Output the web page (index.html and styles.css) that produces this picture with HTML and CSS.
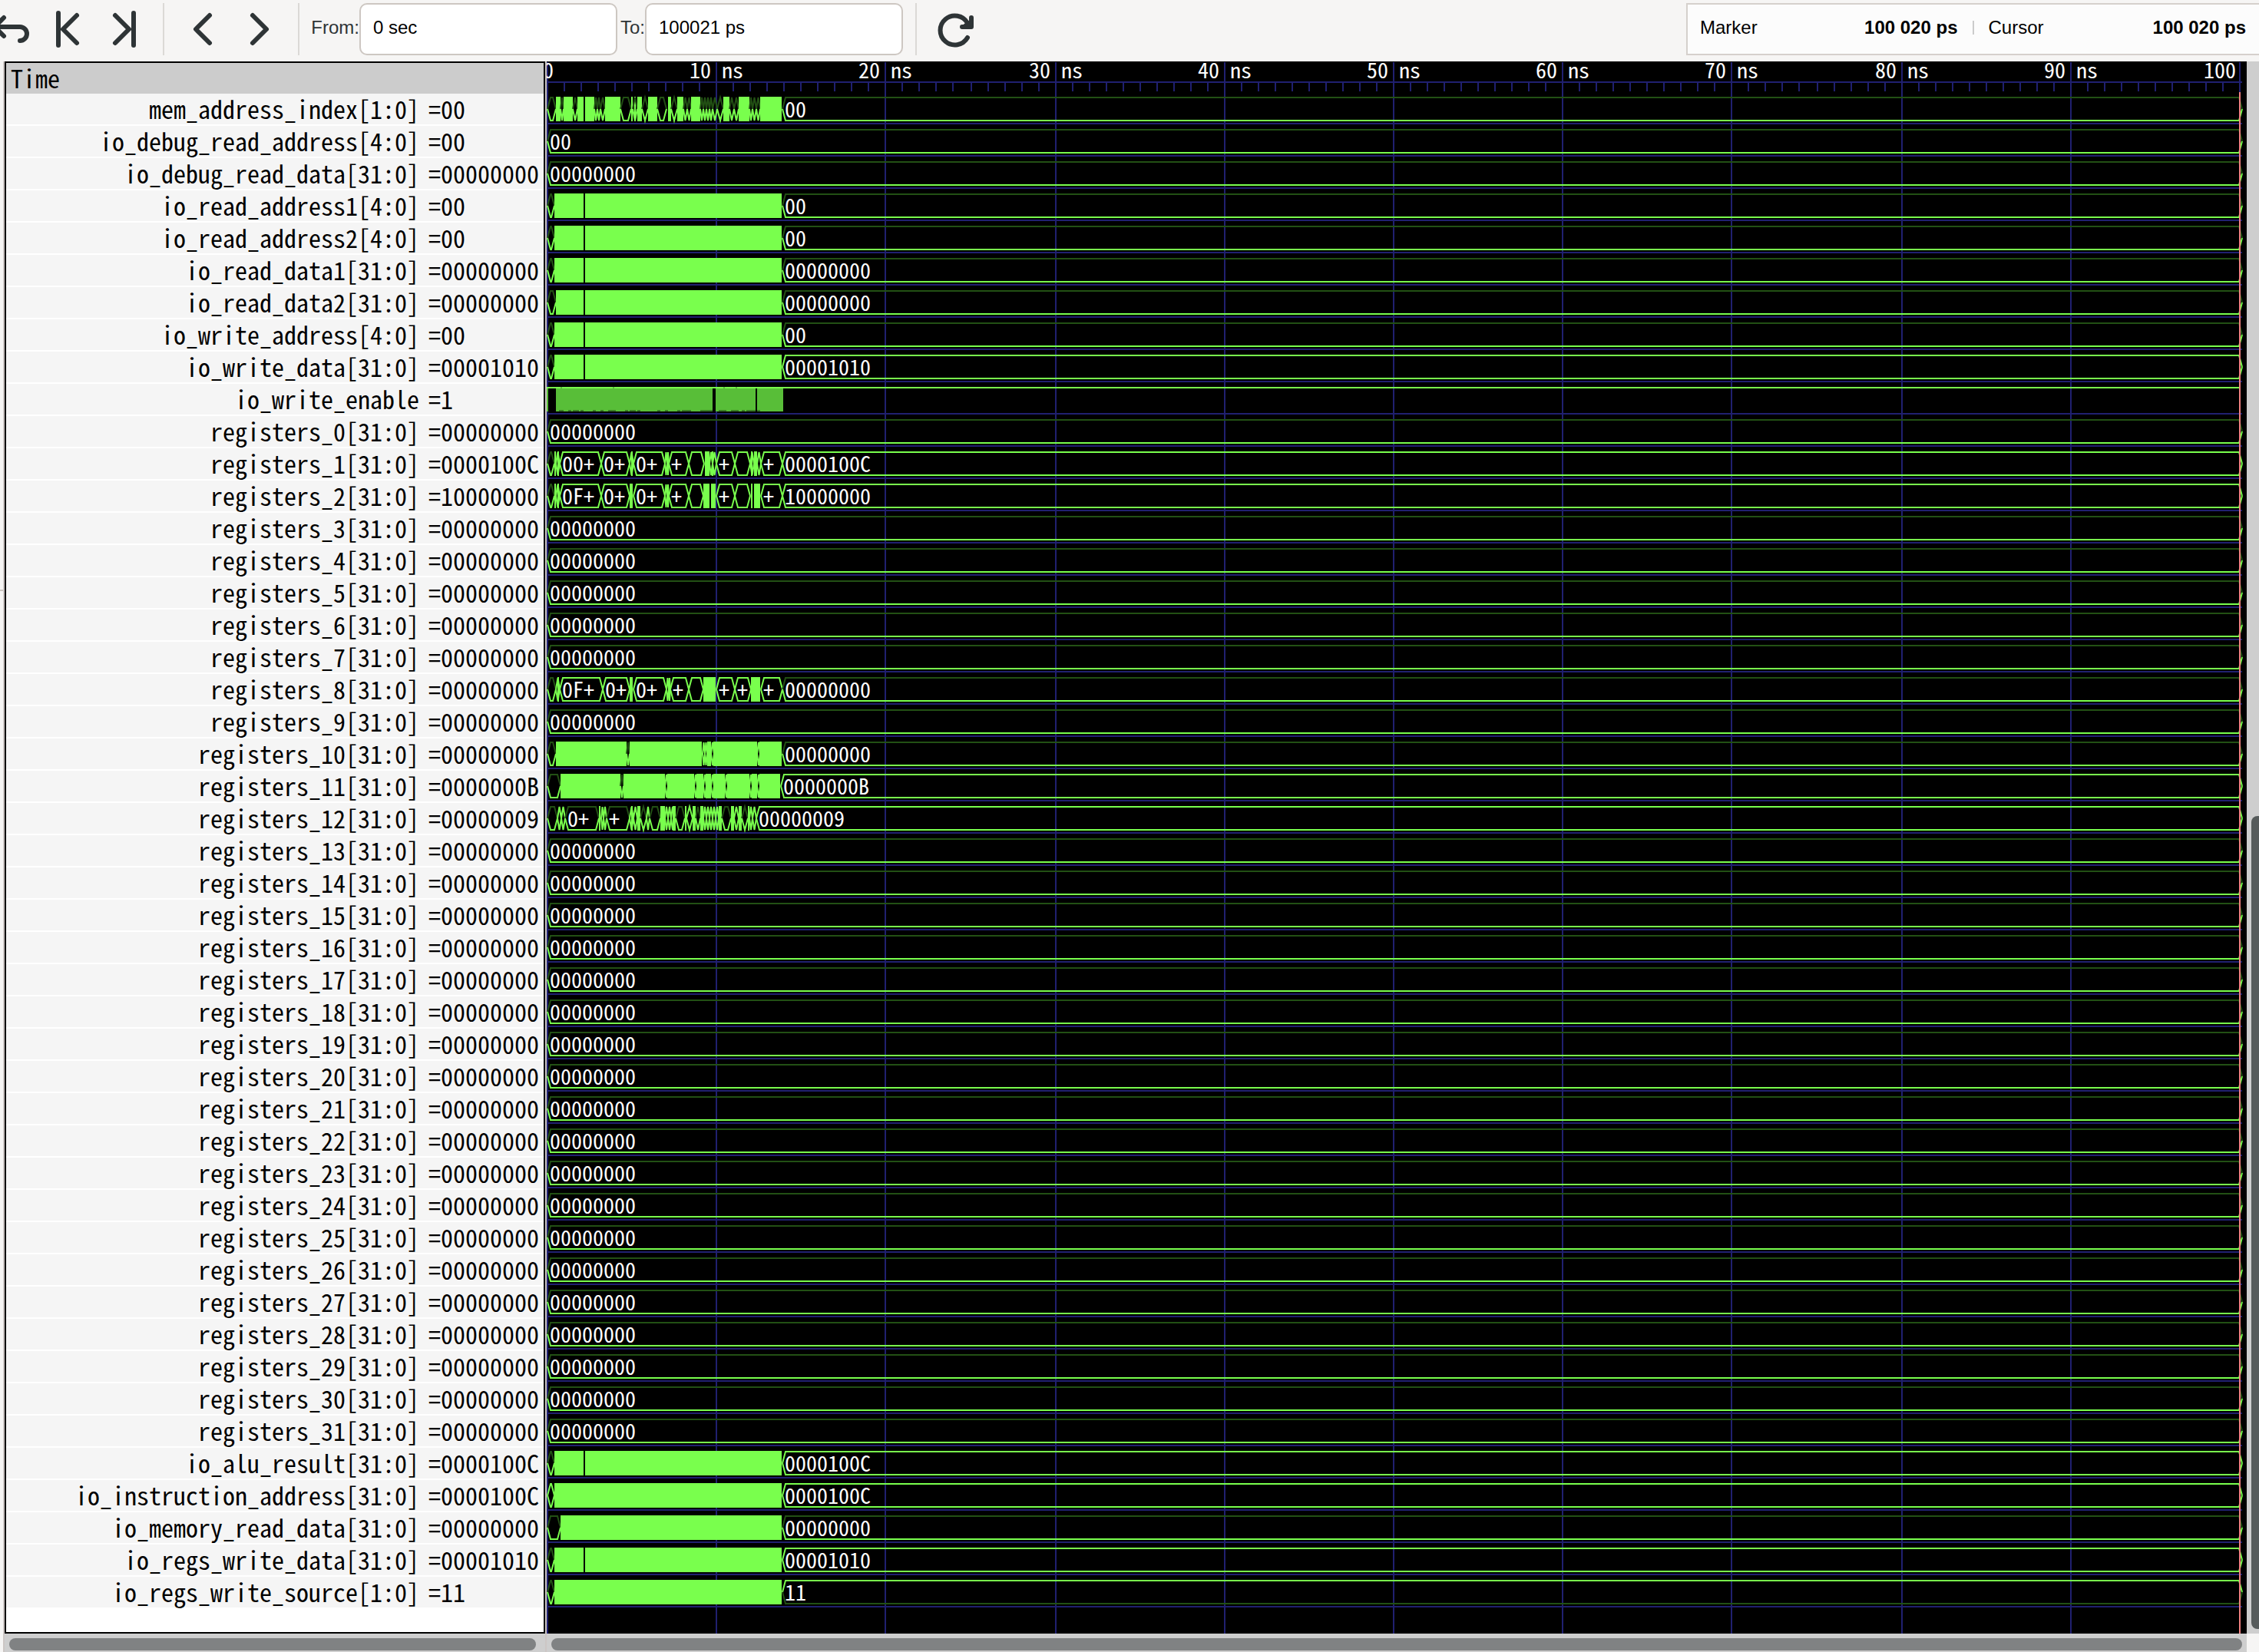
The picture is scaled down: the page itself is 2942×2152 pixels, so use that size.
FILE: index.html
```
<!DOCTYPE html>
<html lang="en">
<head>
<meta charset="utf-8">
<title>Waveform viewer</title>
<link rel="stylesheet" href="styles.css">
</head>
<body>
<header class="toolbar">
  <button class="tool" type="button" aria-label="Undo zoom"><svg viewBox="0 0 74 76"><path d="M28 23L16 35L28 47M17 35H49A9 9 0 0 1 49 53"/></svg></button>
  <button class="tool" type="button" aria-label="Zoom to start"><svg viewBox="0 0 74 76"><path d="M25 17V59M49 20L31 38L49 56"/></svg></button>
  <button class="tool" type="button" aria-label="Zoom to end"><svg viewBox="0 0 74 76"><path d="M49 17V59M25 20L43 38L25 56"/></svg></button>
  <span class="divider"></span>
  <button class="tool" type="button" aria-label="Find previous edge"><svg viewBox="0 0 74 76"><path d="M46 20L28 38L46 56"/></svg></button>
  <button class="tool" type="button" aria-label="Find next edge"><svg viewBox="0 0 74 76"><path d="M28 20L46 38L28 56"/></svg></button>
  <span class="divider"></span>
  <label class="from" for="from">From:</label>
  <input class="range" id="from" type="text" value="0 sec">
  <label class="to" for="to">To:</label>
  <input class="range" id="to" type="text" value="100021 ps">
  <span class="divider"></span>
  <button class="tool" type="button" aria-label="Reload"><svg viewBox="0 0 74 76"><path d="M53 49A19 19 0 1 1 53 30L56 34M58 23V35H46"/><path class="solid" d="M49 32L58 26V35Z"/></svg></button>
  <dl class="times">
    <div class="time"><dt>Marker</dt><dd>100 020 ps</dd></div>
    <span class="times-split"></span>
    <div class="time"><dt>Cursor</dt><dd>100 020 ps</dd></div>
  </dl>
</header>
<main class="viewer">
  <div class="gutter"><span class="grip"></span></div>
  <section class="names">
    <div class="names-pane">
      <table class="signals">
        <colgroup><col class="col-name"><col></colgroup>
        <thead><tr><th colspan="2">Time</th></tr></thead>
        <tbody id="signals"></tbody>
      </table>
    </div>
    <div class="hscroll"><span class="hthumb"></span></div>
  </section>
  <section class="waves">
    <svg class="canvas" id="canvas" role="img" aria-label="Signal waveforms"></svg>
    <div class="hscroll"><span class="hthumb"></span></div>
  </section>
  <div class="side">
    <div class="vscroll"><span class="vthumb"></span></div>
  </div>
</main>
<script src="waves.js"></script>
</body>
</html>
```
FILE: styles.css
```
* { box-sizing: border-box; }

body {
  display: flex;
  flex-direction: column;
  height: 100vh;
  margin: 0;
  overflow: hidden;
  background: #f6f5f4;
  color: #000;
  font-family: "Liberation Sans", Arial, sans-serif;
  font-size: 24px;
}

/* Toolbar */
.toolbar {
  display: flex;
  flex: none;
  height: 80px;
  margin-left: -23px;
  padding: 4px 0 8px;
  color: #2e3436;
}
.tool {
  flex: none;
  width: 74px;
  height: 76px;
  margin: -4px 0 0;
  padding: 0;
  border: 0;
  background: none;
}
.tool svg {
  display: block;
  width: 74px;
  height: 76px;
  fill: none;
  stroke: #2e3436;
  stroke-width: 6;
  stroke-linecap: round;
  stroke-linejoin: round;
}
.tool .solid { fill: #2e3436; stroke-width: 2; }
.divider {
  flex: none;
  width: 2px;
  margin: 0 13px;
  background: #dbd9d6;
}
.toolbar label {
  flex: none;
  line-height: 64px;
  text-align: right;
}
.from { width: 65px; }
.to { width: 36px; }
.range {
  flex: none;
  width: 336px;
  height: 68px;
  padding: 0 16px 4px;
  border: 2px solid #cdc7c2;
  border-radius: 10px;
  background: #fff;
  color: #000;
  font: inherit;
}
.to + .range { margin-right: 3px; }
.times {
  display: flex;
  flex: none;
  align-items: center;
  gap: 19px;
  width: 746px;
  height: 68px;
  margin: 0 0 0 auto;
  padding: 0 17px 4px 16px;
  border: 2px solid #d5d0cc;
  border-right: 0;
  background: #fcfcfc;
  color: #000;
}
.time {
  display: flex;
  flex: 1;
  justify-content: space-between;
}
.time dd { margin: 0; font-weight: bold; }
.times-split { width: 2px; height: 18px; background: #ccc; }

/* Panes */
.viewer {
  display: flex;
  flex: 1;
  min-height: 0;
}
.gutter {
  flex: none;
  width: 4px;
  padding-top: 688px;
}
.grip { display: block; height: 2px; background: #ccc6c1; }
.names, .waves {
  display: flex;
  flex-direction: column;
  min-height: 0;
}
.names {
  flex: none;
  width: 708px;
  border: solid #ccc6c4;
  border-width: 0 2px;
}
.names-pane {
  flex: 1;
  min-height: 0;
  overflow: hidden;
  border: 2px solid #000;
  background: #fff;
}
.signals {
  width: 100%;
  border-collapse: separate;
  border-spacing: 0;
  table-layout: fixed;
  font-family: "Noto Sans Mono CJK SC", "DejaVu Sans Mono", monospace;
  font-size: 32px;
  font-variant-numeric: slashed-zero;
  line-height: 36px;
  white-space: pre;
}
.col-name { width: 538px; }
.signals th {
  padding: 1px 6px 3px;
  background: #ccc;
  font-weight: normal;
  text-align: left;
}
.signals td {
  padding: 1px 0 3px;
  border-bottom: 2px solid #fff;
  background: #f5f5f5;
}
.signals .name { text-align: right; }
.signals .value { padding-left: 12px; }

.waves {
  flex: 1;
  min-width: 0;
}
.canvas {
  display: block;
  flex: 1;
  width: 100%;
  min-height: 0;
  background: #000;
  fill: #fff;
  font-family: "Noto Sans Mono CJK SC", "DejaVu Sans Mono", monospace;
  font-size: 28px;
  font-variant-numeric: slashed-zero;
}
.grid { fill: #202070; }
.marker { fill: #f08080; }
.full { fill: #79ff4d; }
.half { fill: #58be38; }
.low { fill: #3a7f25; }
.hi, .lo { fill: none; stroke-width: 2; }
.hi { stroke: #79ff4d; }
.lo { stroke: #225014; }

/* Scrollbars */
.hscroll {
  flex: none;
  height: 24px;
  padding: 6px 6px 2px;
  background: #cecece;
}
.names .hscroll { padding-right: 12px; }
.hthumb {
  display: block;
  height: 16px;
  border-radius: 8px;
  background: #808283;
}
.side {
  flex: none;
  width: 16px;
  padding-bottom: 24px;
}
.vscroll {
  display: flex;
  flex-direction: column;
  justify-content: flex-end;
  height: 100%;
  padding: 6px 0 6px 6px;
  background: #cecece;
}
.vthumb {
  height: 52%;
  border-radius: 8px 0 0 8px;
  background: #565b5b;
}
```
FILE: waves.js
```
// Shapes of a trace: box(from, to, style, label) or fill(from, to), in canvas pixels.
// Styles: z = all bits zero, v = mixed bits, h = all bits one. A box without an end runs to the last sample.
const box = (a, b, s, t) => ({ a, b, s, t });
const fill = (a, b) => ({ a, b, fill: true });
const chain = (s, ...xs) => xs.slice(1).map((x, i) => box(xs[i], x, s));
const idle = v => [box(1, null, "z", v)];
const busy = (v, s) => [box(1, 10, "z"), fill(10, 48), fill(50, 306), box(307, null, s, v)];

const memIndex = [
  box(1, 12, "z"), fill(12, 18), box(18, 22, "z"), fill(22, 34), box(34, 40, "z"), fill(40, 48), fill(50, 62),
  ...chain("z", 62, 66, 70, 76), fill(76, 96), box(96, 110, "z"), fill(110, 112), fill(114, 116), box(112, 118, "z"),
  fill(118, 124), box(124, 132, "z"), fill(132, 144), box(144, 156, "z"), fill(158, 162), box(162, 170, "z"),
  fill(170, 178), ...chain("z", 178, 183, 188), fill(188, 200), ...chain("z", 200, 204, 208, 212, 216, 222, 230),
  fill(230, 238), ...chain("z", 238, 244, 250), fill(250, 264), ...chain("z", 264, 268, 273, 278), fill(278, 306),
  box(307, null, "z", "00")
];
const reg1 = [
  box(1, 10, "z"), fill(10, 12), fill(14, 16), ...chain("v", 12, 17), box(17, 71, "v", "00+"), box(71, 108, "v", "0+"),
  fill(110, 112), ...chain("v", 108, 113), box(113, 154, "v", "0+"), ...chain("v", 154, 157, 159), box(159, 185, "v", "+"),
  box(185, 205, "v"), fill(206, 212), ...chain("v", 212, 216, 221), fill(215, 217), box(221, 245, "v", "+"),
  box(245, 265, "v"), fill(266, 268), fill(270, 274), ...chain("v", 265, 270, 274, 279), box(279, 307, "v", "+"),
  box(307, null, "v", "0000100C")
];
const reg2 = [
  box(1, 10, "z"), fill(10, 12), fill(14, 16), ...chain("v", 12, 17), box(17, 71, "v", "0F+"), box(71, 108, "v", "0+"),
  fill(108, 112), box(113, 154, "v", "0+"), ...chain("v", 154, 157, 159), box(159, 185, "v", "+"),
  box(185, 204, "v"), fill(204, 212), fill(214, 220), box(221, 245, "v", "+"),
  box(245, 265, "v"), fill(266, 268), fill(270, 278), box(279, 307, "v", "+"),
  box(307, null, "v", "10000000")
];
const reg8 = [
  box(1, 12, "z"), fill(14, 16), ...chain("v", 12, 17), box(17, 73, "v", "0F+"), box(73, 108, "v", "0+"),
  fill(108, 112), box(113, 156, "v", "0+"), ...chain("v", 156, 159, 161), box(161, 185, "v", "+"),
  box(185, 204, "v"), fill(204, 220), box(221, 245, "v", "+"), box(245, 266, "v", "+"), fill(266, 278),
  box(279, 307, "v", "+"), box(307, null, "z", "00000000")
];
const reg10 = [
  box(1, 12, "z"), fill(12, 104), box(104, 108, "z"), fill(108, 202), box(203, 206, "v"), box(206, 209, "v"),
  fill(209, 214), box(214, 218, "v"), fill(217, 274), box(274, 278, "v"), fill(277, 306), box(307, null, "z", "00000000")
];
const reg11 = [
  box(1, 18, "z"), fill(18, 96), box(96, 100, "z"), fill(100, 154), box(154, 158, "v"), fill(157, 192),
  box(192, 196, "v"), fill(195, 204), box(204, 208, "v"), fill(207, 214), box(214, 218, "v"), fill(217, 232),
  box(232, 236, "v"), fill(235, 264), box(264, 268, "v"), fill(267, 274), box(274, 278, "v"), fill(277, 304),
  box(305, null, "v", "0000000B")
];
const reg12 = [
  box(1, 14, "z"), ...chain("v", 14, 19, 24), box(24, 68, "z", "0+"), fill(68, 70), ...chain("v", 71, 74, 78),
  box(78, 108, "z", "+"), fill(110, 112), ...chain("v", 108, 113, 118), fill(118, 122), box(122, 130, "z"),
  box(130, 134, "v"), box(134, 148, "z"), fill(148, 154), ...chain("v", 154, 158, 162, 166), fill(164, 168),
  box(168, 180, "z"), fill(180, 182), box(182, 190, "v"), fill(190, 194), box(194, 200, "z"), fill(200, 204),
  ...chain("v", 204, 208, 212, 216, 220, 224), fill(224, 228), box(228, 240, "z"), fill(240, 244),
  box(244, 250, "v"), fill(250, 254), box(254, 262, "z"), fill(262, 264), ...chain("v", 264, 268, 273),
  box(273, null, "v", "00000009")
];

const zero = "00000000";
const register = n => ["registers_" + n + "[31:0]", zero, idle(zero)];
const signals = [
  ["mem_address_index[1:0]", "00", memIndex],
  ["io_debug_read_address[4:0]", "00", idle("00")],
  ["io_debug_read_data[31:0]", zero, idle(zero)],
  ["io_read_address1[4:0]", "00", busy("00", "z")],
  ["io_read_address2[4:0]", "00", busy("00", "z")],
  ["io_read_data1[31:0]", zero, busy(zero, "z")],
  ["io_read_data2[31:0]", zero, [box(1, 12, "z"), fill(12, 48), fill(50, 306), box(307, null, "z", zero)]],
  ["io_write_address[4:0]", "00", busy("00", "z")],
  ["io_write_data[31:0]", "00001010", busy("00001010", "v")],
  ["io_write_enable", "1", null],
  register(0),
  ["registers_1[31:0]", "0000100C", reg1],
  ["registers_2[31:0]", "10000000", reg2],
  ...[3, 4, 5, 6, 7].map(register),
  ["registers_8[31:0]", zero, reg8],
  register(9),
  ["registers_10[31:0]", zero, reg10],
  ["registers_11[31:0]", "0000000B", reg11],
  ["registers_12[31:0]", "00000009", reg12],
  ...Array.from({ length: 19 }, (_, i) => register(i + 13)),
  ["io_alu_result[31:0]", "0000100C", busy("0000100C", "v")],
  ["io_instruction_address[31:0]", "0000100C", [box(1, 10, "v"), fill(10, 306), box(307, null, "v", "0000100C")]],
  ["io_memory_read_data[31:0]", zero, [box(1, 18, "z"), fill(18, 306), box(307, null, "z", zero)]],
  ["io_regs_write_data[31:0]", "00001010", busy("00001010", "v")],
  ["io_regs_write_source[1:0]", "11", [box(1, 10, "z"), fill(10, 306), box(307, null, "h", "11")]]
];

const rect = (cls, x, y, w, h) => `<rect class="${cls}" x="${x}" y="${y}" width="${w}" height="${h}"/>`;
const text = (x, y, t, anchor = "start") => `<text x="${x}" y="${y}" text-anchor="${anchor}">${t}</text>`;

// One half of a bus outline: from the middle out to the rail and back.
function rail(cls, a, b, mid, edge) {
  const slope = Math.min(4, (b - a) / 2);
  return `<path class="${cls}" d="M${a} ${mid}L${a + slope} ${edge}H${b - slope}L${b} ${mid}"/>`;
}

function bus(shapes, y, end) {
  return shapes.map(({ a, b, s, t, fill }) => {
    if (fill) return rect("full", a, y + 4, b - a, 32);
    const last = b === null ? end : b;
    return rail(s === "z" ? "lo" : "hi", a, last, y + 20, y + 5)
      + rail(s === "h" ? "lo" : "hi", a, last, y + 20, y + 35)
      + (t ? text(a + 3, y + 31, t) : "");
  }).join("");
}

// The single-bit write strobe: dense toggling under a high rail.
function strobe(y, end) {
  const blocks = [[0, 2], [12, 216], [220, 272], [274, 308]];
  const lows = [[16, 22], [28, 32], [34, 42], [44, 48], [60, 64], [70, 74], [80, 90], [102, 106], [108, 116],
    [118, 122], [144, 148], [154, 158], [170, 174], [176, 188], [200, 216], [224, 234], [240, 250], [254, 258], [260, 272], [274, 278]];
  const notches = [18, 86, 230, 246];
  return blocks.map(([a, b]) => rect("half", a, y + 6, b - a, 30)).join("")
    + lows.map(([a, b]) => rect("low", a, y + 34, b - a, 2)).join("")
    + rect("full", 0, y + 4, end - 4, 2)
    + notches.map(a => rect("half", a, y + 4, 2, 2)).join("");
}

function draw() {
  const canvas = document.getElementById("canvas");
  const { width, height } = canvas.getBoundingClientRect();
  const top = 42;
  const end = Math.round(width) - 6;
  const span = end - 4;
  const at = ns => 2 * Math.round(span * ns / 200);
  let out = rect("grid", 0, 26, end, 2);
  for (let ns = 0; ns <= 100; ns++) {
    out += ns % 10 ? rect("grid", at(ns), 28, 2, 11) : rect("grid", at(ns), 1, 2, height);
  }
  signals.forEach((row, i) => { out += rect("grid", 2, top + 42 * i + 38, end - 2, 2); });
  out += text(2, 22, "0", "middle");
  for (let ns = 10; ns < 100; ns += 10) out += text(at(ns) + 1, 22, ns + " ns", "middle");
  out += text(at(100) - 4, 22, "100", "end");
  signals.forEach(([, , shapes], i) => {
    const y = top + 42 * i;
    out += shapes ? bus(shapes, y, end) : strobe(y, end);
  });
  out += rect("marker", at(100), 40, 2, height);
  canvas.innerHTML = out;
}

document.getElementById("signals").innerHTML = signals
  .map(([name, value]) => `<tr><td class="name">${name}</td><td class="value">=${value}</td></tr>`)
  .join("");
draw();
window.addEventListener("resize", draw);
```
